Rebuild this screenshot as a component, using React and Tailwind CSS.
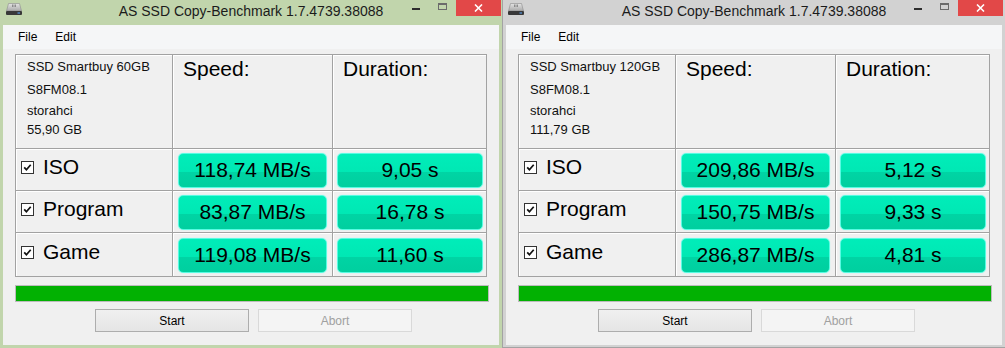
import React from 'react';

const windows = [
  {
    id: 'left',
    active: true,
    disk: ['SSD Smartbuy 60GB', 'S8FM08.1', 'storahci', '55,90 GB'],
    rows: [
      { name: 'ISO', speed: '118,74 MB/s', time: '9,05 s' },
      { name: 'Program', speed: '83,87 MB/s', time: '16,78 s' },
      { name: 'Game', speed: '119,08 MB/s', time: '11,60 s' },
    ],
  },
  {
    id: 'right',
    active: false,
    disk: ['SSD Smartbuy 120GB', 'S8FM08.1', 'storahci', '111,79 GB'],
    rows: [
      { name: 'ISO', speed: '209,86 MB/s', time: '5,12 s' },
      { name: 'Program', speed: '150,75 MB/s', time: '9,33 s' },
      { name: 'Game', speed: '286,87 MB/s', time: '4,81 s' },
    ],
  },
];

// small hard-drive glyph used as the window icon
function DriveIcon() {
  return (
    <svg width="18" height="14" viewBox="0 0 18 14">
      <defs>
        <linearGradient id="drv" x1="0" y1="0" x2="0" y2="1">
          <stop offset="0" stopColor="#e4e4e4" />
          <stop offset="1" stopColor="#a9a9a9" />
        </linearGradient>
      </defs>
      <path d="M3.5 1.5h11l2 7.5h-15z" fill="url(#drv)" stroke="#8c8c8c" strokeWidth="0.6" />
      <path d="M7.5 2.5v2.5M9 2.5v2.5M10.5 2.5v2.5" stroke="#7a7a7a" strokeWidth="0.8" />
      <rect x="1" y="9" width="16" height="4" rx="1" fill="#383838" />
      <rect x="12.5" y="10.5" width="2.5" height="1" fill="#5aa8ff" />
    </svg>
  );
}

function CheckBox() {
  return (
    <svg width="13" height="13" viewBox="0 0 13 13" className="shrink-0">
      <rect x="0.5" y="0.5" width="12" height="12" fill="#fff" stroke="#333" />
      <path d="M3.2 6.4l2.2 2.3 4.3-5" fill="none" stroke="#111" strokeWidth="1.7" />
    </svg>
  );
}

function ValueBox({ text, width }) {
  return (
    <div
      className={`${width} h-[35px] flex items-center justify-center rounded-[5px] border border-[#58fbe2] shadow-[0_0_1px_#7ffff0] bg-[linear-gradient(#00edb9_0%,#00e8b4_54%,#00d4a4_55%,#00cf9f_100%)] text-[21px] leading-[24px] text-black`}
    >
      {text}
    </div>
  );
}

function Window({ w }) {
  const frame = w.active ? 'bg-[#c1d5ac]' : 'bg-[#d2d2d2] border-l border-b border-[#a3a3a3]';
  const width = w.active ? 'w-[502px]' : 'w-[503px]';
  return (
    <div className={`flex flex-col h-[348px] ${width} ${frame}`}>
      {/* title bar */}
      <div className="grid grid-cols-[1fr_auto_1fr] h-[25px] shrink-0">
        <div className={`${w.active ? 'pl-[5px]' : 'pl-[4px]'} pt-[2px]`}>
          <DriveIcon />
        </div>
        <div className="pt-[3px] text-[14px] leading-[16px] text-[#1b1b1b]">
          AS SSD Copy-Benchmark 1.7.4739.38088
        </div>
        <div className={`flex justify-end items-start ${w.active ? 'pr-[1px]' : 'pr-[2px]'}`}>
          <div className="w-[8px] h-[2px] mt-[8px] bg-[#2e2e2e]" />
          <div className="w-[9px] h-[7px] mt-[3px] ml-[18px] border border-t-2 border-[#6b6b6b]" />
          <div className="w-[45px] h-[16px] ml-[9px] bg-[#e24848] flex items-center justify-center">
            <svg width="9" height="8" viewBox="0 0 9 8">
              <path d="M1 0.5l7 7M8 0.5l-7 7" stroke="#fff" strokeWidth="1.6" />
            </svg>
          </div>
        </div>
      </div>

      {/* client area */}
      <div className={`flex-1 ml-[3px] ${w.active ? 'mr-[3px] mb-[3px]' : 'mr-[3px] mb-[2px] ml-[2px]'} bg-[#f0f0f0] flex flex-col`}>
        <div className="h-[24px] shrink-0 flex items-center pl-[15px] bg-[#f5f6f7] text-[12px] text-black">
          <span>File</span>
          <span className="ml-[18px]">Edit</span>
        </div>

        <div className="mt-[5px] ml-[12px] w-[472px] grid grid-cols-[156px_159px_153px] grid-rows-[93px_41px_41px_43px] gap-px p-px bg-[#a2a2a2]">
          <div className="bg-[#f0f0f0] border-l border-t border-white pl-[10px] flex flex-col text-[13px] leading-[15px] text-[#111]">
            <span className="mt-[3px]">{w.disk[0]}</span>
            <span className="mt-[8px]">{w.disk[1]}</span>
            <span className="mt-[6px]">{w.disk[2]}</span>
            <span className="mt-[4px]">{w.disk[3]}</span>
          </div>
          <div className="bg-[#f0f0f0] border-l border-t border-white pl-[9px] pt-px text-[21px] leading-[24px] text-black">
            Speed:
          </div>
          <div className="bg-[#f0f0f0] border-l border-t border-white pl-[9px] pt-px text-[21px] leading-[24px] text-black">
            Duration:
          </div>

          {w.rows.map((r) => (
            <React.Fragment key={r.name}>
              <div className="bg-[#f0f0f0] border-l border-t border-white pl-[4px] pb-[6px] flex items-center gap-[9px] text-[21px] leading-[24px] text-black">
                <CheckBox />
                <span>{r.name}</span>
              </div>
              <div className="bg-[#f0f0f0] border-l border-t border-white pl-[4px] flex items-center">
                <ValueBox text={r.speed} width="w-[149px]" />
              </div>
              <div className="bg-[#f0f0f0] border-l border-t border-white pl-[3px] flex items-center">
                <ValueBox text={r.time} width="w-[146px]" />
              </div>
            </React.Fragment>
          ))}
        </div>

        <div className="mt-[8px] ml-[12px] w-[474px] h-[17px] border border-[#bcbcbc] bg-[#02b102]" />

        <div className="mt-[7px] pl-[92px] flex gap-[9px] text-[12px]">
          <button className="w-[154px] h-[23px] border border-[#adadad] bg-[linear-gradient(#f0f0f0,#e5e5e5)] text-black">
            Start
          </button>
          <button className="w-[154px] h-[23px] border border-[#d9d9d9] bg-[#f4f4f4] text-[#a0a0a0]">
            Abort
          </button>
        </div>
      </div>
    </div>
  );
}

export default function App() {
  return (
    <div className="flex w-[1005px] h-[348px] overflow-hidden font-['Liberation_Sans',Arial,sans-serif]">
      {windows.map((w) => (
        <Window key={w.id} w={w} />
      ))}
    </div>
  );
}
